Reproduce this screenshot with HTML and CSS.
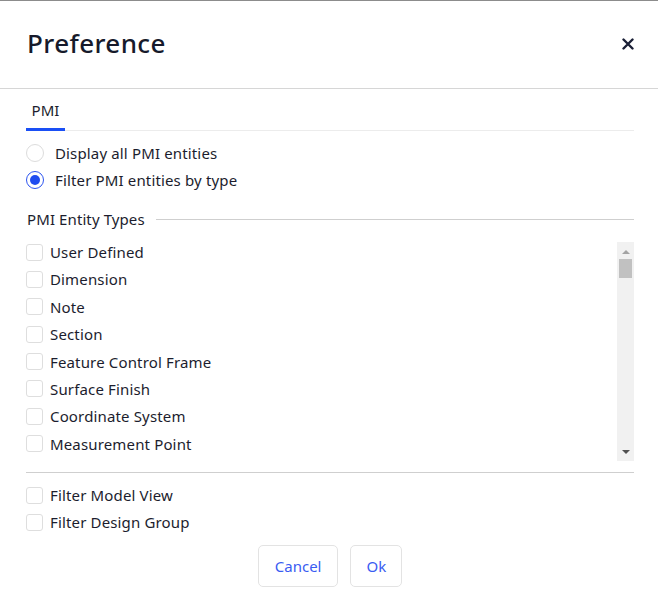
FILE: index.html
```html
<!DOCTYPE html>
<html>
<head>
<meta charset="utf-8">
<link rel="stylesheet" href="styles.css">
</head>
<body>
<div class="dialog">
  <div class="header">
    <h1 class="title">Preference</h1>
    <button class="close" aria-label="Close">
      <svg width="12" height="12" viewBox="0 0 12 12"><path d="M1.5 1.5 L10.5 10.5 M10.5 1.5 L1.5 10.5" stroke="#1a1f36" stroke-width="2.4" stroke-linecap="round"/></svg>
    </button>
  </div>
  <div class="content">
    <div class="tabs"><div class="tab active">PMI</div></div>
    <div class="radios">
      <label class="radio-row"><span class="radio"></span>Display all PMI entities</label>
      <label class="radio-row"><span class="radio checked"></span>Filter PMI entities by type</label>
    </div>
    <div class="legend"><span>PMI Entity Types</span><span class="legend-line"></span></div>
    <div class="listbox">
      <div class="list">
        <label class="check-row"><span class="box"></span>User Defined</label>
        <label class="check-row"><span class="box"></span>Dimension</label>
        <label class="check-row"><span class="box"></span>Note</label>
        <label class="check-row"><span class="box"></span>Section</label>
        <label class="check-row"><span class="box"></span>Feature Control Frame</label>
        <label class="check-row"><span class="box"></span>Surface Finish</label>
        <label class="check-row"><span class="box"></span>Coordinate System</label>
        <label class="check-row"><span class="box"></span>Measurement Point</label>
      </div>
      <div class="scrollbar">
        <span class="arrow up"></span>
        <span class="thumb"></span>
        <span class="track-fill"></span>
        <span class="arrow down"></span>
      </div>
    </div>
    <div class="divider"></div>
    <div class="filters">
      <label class="check-row"><span class="box"></span>Filter Model View</label>
      <label class="check-row"><span class="box"></span>Filter Design Group</label>
    </div>
  </div>
  <div class="footer">
    <button class="btn">Cancel</button>
    <button class="btn">Ok</button>
  </div>
</div>
</body>
</html>
```

FILE: styles.css
```css
* { box-sizing: border-box; }
html, body { margin: 0; padding: 0; background: #fff; }
body {
  font-family: "Noto Sans", "Open Sans", sans-serif;
  color: #1c1d2e;
  border-top: 1px solid #8c8c8c;
}
.dialog { width: 658px; }
.header {
  height: 88px;
  display: flex;
  align-items: center;
  justify-content: space-between;
  padding: 0 24px 3px 27px;
  border-bottom: 1px solid #d6d6d6;
}
.title {
  margin: 0;
  font-size: 26px;
  font-weight: 500;
  color: #161a2b;
  letter-spacing: 0.4px;
}
.close {
  border: 0;
  background: none;
  padding: 0;
  width: 12px;
  height: 12px;
  display: flex;
  margin-top: 1px;
}
.content { padding: 0 24px 0 26px; }
.tabs {
  height: 42px;
  border-bottom: 1px solid #ececec;
  display: flex;
  align-items: flex-end;
}
.tab {
  width: 39px;
  height: 41px;
  margin-bottom: -1px;
  display: flex;
  align-items: center;
  justify-content: center;
  padding-top: 1px;
  padding-bottom: 0;
  font-size: 15px;
  color: #1c1d2e;
}
.tab.active { border-bottom: 3px solid #1a4ff5; }
.radios { padding-top: 8px; }
.radio-row, .check-row {
  display: flex;
  align-items: center;
  font-size: 15px;
  letter-spacing: 0.15px;
  color: #1c1d2e;
}
.radio-row { height: 27px; gap: 11px; }
.radio {
  width: 18px;
  height: 18px;
  border-radius: 50%;
  border: 1px solid #dcdcdc;
  background: #fff;
  display: flex;
  align-items: center;
  justify-content: center;
}
.radio.checked { border-color: #2d55f0; border-width: 1.5px; }
.radio.checked::after {
  content: "";
  width: 10px;
  height: 10px;
  border-radius: 50%;
  background: #1f4cf0;
}
.legend {
  display: flex;
  align-items: center;
  gap: 11px;
  height: 24px;
  margin-top: 14px;
  padding-left: 1px;
  font-size: 15px;
  letter-spacing: 0.1px;
}
.legend-line { flex: 1; height: 1px; background: #cfcfcf; }
.listbox {
  display: flex;
  height: 219px;
  margin-top: 11px;
}
.list {
  flex: 1;
  display: flex;
  flex-direction: column;
  gap: 7.4px;
}
.check-row { height: 20px; gap: 7px; }
.box {
  width: 17px;
  height: 17px;
  border: 1px solid #dedede;
  border-radius: 3px;
  background: #fff;
}
.scrollbar {
  width: 17px;
  background: #f1f1f1;
  display: flex;
  flex-direction: column;
  align-items: center;
}
.arrow {
  width: 0;
  height: 0;
  border-left: 4px solid transparent;
  border-right: 4px solid transparent;
}
.arrow.up { border-bottom: 4px solid #a3a3a3; margin-top: 8px; }
.arrow.down { border-top: 4px solid #505050; margin-bottom: 7px; }
.thumb {
  width: 13px;
  height: 19px;
  background: #c1c1c1;
  margin-top: 5px;
}
.track-fill { flex: 1; }
.divider { height: 1px; background: #cfcfcf; margin-top: 11px; }
.filters {
  display: flex;
  flex-direction: column;
  gap: 7px;
  padding-top: 12px;
}
.footer {
  display: flex;
  justify-content: center;
  gap: 12px;
  margin-top: 13px;
  padding-left: 2px;
}
.btn {
  height: 42px;
  padding: 0 16px;
  border: 1px solid #e3e3e3;
  border-radius: 5px;
  background: #fff;
  font-family: "Noto Sans", "Open Sans", sans-serif;
  font-size: 15px;
  color: #3a5cf2;
}
.btn + .btn { padding: 0 15px; }
```
